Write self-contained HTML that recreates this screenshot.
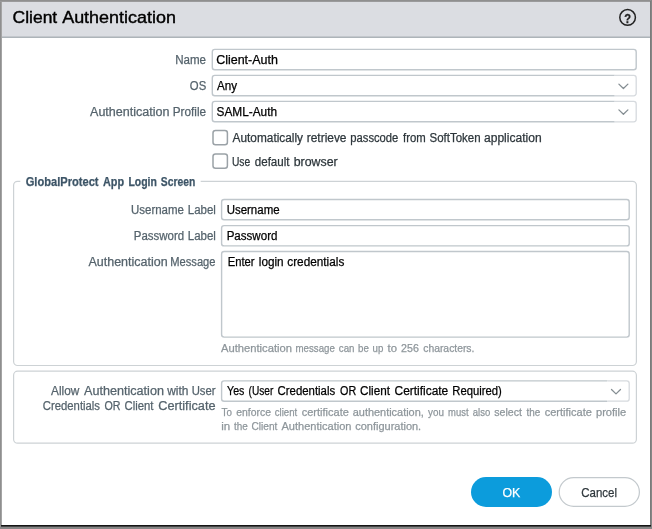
<!DOCTYPE html>
<html><head><meta charset="utf-8"><title>Client Authentication</title>
<style>
*{box-sizing:border-box;margin:0;padding:0}
html,body{width:652px;height:529px;overflow:hidden;background:#fff}
body{font-family:"Liberation Sans",sans-serif;font-size:12px;color:#000;position:relative}
#wrap{position:absolute;left:0;top:0;width:652px;height:529px;will-change:transform}
.abs{position:absolute}
.t{position:absolute;left:0;white-space:nowrap;line-height:1;transform-origin:0 50%;-webkit-text-stroke:0.25px currentColor}
#bl{left:0;top:0;width:2px;height:529px;background:linear-gradient(90deg,#8f8f8f 0,#8f8f8f 1px,#a4a4a4 1px,#a4a4a4 2px)}
#bt{left:0;top:0;width:652px;height:2px;background:linear-gradient(180deg,#8f8f8f 0,#8f8f8f 1px,#9a9a9b 1px,#9a9a9b 2px)}
#br1{left:650px;top:1px;width:1px;height:526px;background:#7b7b7b}
#br2{left:651px;top:0;width:1px;height:529px;background:#868686}
#bb1{left:1px;top:525px;width:650px;height:2px;background:linear-gradient(180deg,#141414 0,#141414 1px,#454545 1px,#454545 2px)}
#bb2{left:0;top:527px;width:652px;height:2px;background:#868686}
#hdr{left:2px;top:2px;width:648px;height:35px;background:#dbdde2;border-bottom:1px solid #c3c7cc}
#hdr2{left:2px;top:37px;width:648px;height:1px;background:#adb4b9}
.inp{position:absolute;height:21px;border:1px solid #b4bcc0;border-radius:2px;background:#fff}
.trg{position:absolute;width:23px;height:21px;border:1px solid #d3d8db;border-left:none;border-radius:0 2px 2px 0;background:#fff}
.trg svg{position:absolute;left:4px;top:7px}
.cb{position:absolute;width:15px;height:15px;border:1px solid #8a9398;border-radius:2.5px;background:#fff}
.fs{position:absolute;border:1px solid #d0d4d7;border-radius:4px}
.btn{position:absolute;width:81px;height:30px;border-radius:15px}
.tt{-webkit-text-stroke:0.4px currentColor}

</style></head><body><div id="wrap">
<div class="abs" id="hdr"></div><div class="abs" id="hdr2"></div>
<svg class="abs" style="left:617px;top:7px" width="22" height="22" viewBox="0 0 22 22"><circle cx="10.6" cy="10.4" r="7.8" fill="none" stroke="#222" stroke-width="1.5"/><text transform="translate(10.65 15.5) scale(0.84 1)" x="0" y="0" text-anchor="middle" font-family="Liberation Sans, sans-serif" font-weight="bold" font-size="13.2" fill="#222" stroke="#222" stroke-width="0.3">?</text></svg>
<svg class="abs" id="boxes" style="left:0;top:0" width="652" height="529" viewBox="0 0 652 529" fill="none">
<g stroke="#c0c7cc" stroke-width="1.4" fill="#fff">
<rect x="212.3" y="49.4" width="423.9" height="20.3" rx="2.5"/>
<rect x="221.6" y="199.5" width="407.6" height="20.2" rx="2.5"/>
<rect x="221.6" y="225.6" width="407.6" height="20.3" rx="2.5"/>
<rect x="221.6" y="251.5" width="407.6" height="85.6" rx="2.5"/>
</g>
<g stroke="#d6dade" stroke-width="1.3" fill="#fff">
<path d="M614.6 75.4H633.7a2.5 2.5 0 0 1 2.5 2.5V93.3a2.5 2.5 0 0 1 -2.5 2.5H614.6"/>
<path d="M614.6 101.4H633.7a2.5 2.5 0 0 1 2.5 2.5V119.3a2.5 2.5 0 0 1 -2.5 2.5H614.6"/>
<path d="M607.3 380.9H626.7a2.5 2.5 0 0 1 2.5 2.5V398.7a2.5 2.5 0 0 1 -2.5 2.5H607.3"/>
</g>
<g stroke="#c0c7cc" stroke-width="1.4" fill="#fff">
<path d="M614.6 75.4H214.8a2.5 2.5 0 0 0 -2.5 2.5V93.3a2.5 2.5 0 0 0 2.5 2.5H614.6"/>
<path d="M614.6 101.4H214.8a2.5 2.5 0 0 0 -2.5 2.5V119.3a2.5 2.5 0 0 0 2.5 2.5H614.6"/>
<path d="M607.3 380.9H224.1a2.5 2.5 0 0 0 -2.5 2.5V398.7a2.5 2.5 0 0 0 2.5 2.5H607.3"/>
</g>
<g stroke="#858e93" stroke-width="1.3" stroke-linecap="round" stroke-linejoin="round">
<path d="M618.9 84.1L623.4 88.5L627.9 84.1"/>
<path d="M618.9 109.9L623.4 114.3L627.9 109.9"/>
<path d="M611.5 389.5L616 393.9L620.5 389.5"/>
</g>
<g stroke="#9ba2a7" stroke-width="1.5" fill="#fff">
<rect x="213" y="130.6" width="14.4" height="14.2" rx="2.5"/>
<rect x="213" y="154" width="14.4" height="14.2" rx="2.5"/>
</g>
<g stroke="#cdd2d5" stroke-width="1.2">
<path d="M20.3 181.3H17.6a4 4 0 0 0 -4 4V361.5a4 4 0 0 0 4 4H632.4a4 4 0 0 0 4 -4V185.3a4 4 0 0 0 -4 -4H200.7"/>
<rect x="13.6" y="371.2" width="622.8" height="72" rx="4"/>
</g>
<rect x="471" y="477" width="81" height="30" rx="15" fill="#0c9cdc"/>
<rect x="559.2" y="477.6" width="80.2" height="28.8" rx="14.4" fill="#fff" stroke="#c3c9cd" stroke-width="1.2"/>
</svg>

<div class="t tt" id="ti0" style="top:9px;font-size:17px;font-weight:normal;color:#000;transform:translateX(12.53px) scaleX(1.0282)">Client</div>
<div class="t tt" id="ti1" style="top:9px;font-size:17px;font-weight:normal;color:#000;transform:translateX(62.16px) scaleX(1.0557)">Authentication</div>
<div class="t" id="ln0" style="top:54px;font-size:12px;font-weight:normal;color:#55636c;transform:translateX(175.13px) scaleX(0.9641)">Name</div>
<div class="t" id="vn0" style="top:54px;font-size:12px;font-weight:normal;color:#000;transform:translateX(216.13px) scaleX(1.0403)">Client-Auth</div>
<div class="t" id="lo0" style="top:80px;font-size:12px;font-weight:normal;color:#55636c;transform:translateX(189.83px) scaleX(0.9434)">OS</div>
<div class="t" id="vo0" style="top:80px;font-size:12px;font-weight:normal;color:#000;transform:translateX(217.09px) scaleX(0.9716)">Any</div>
<div class="t" id="la0" style="top:106px;font-size:12px;font-weight:normal;color:#55636c;transform:translateX(90.00px) scaleX(1.0464)">Authentication</div>
<div class="t" id="la1" style="top:106px;font-size:12px;font-weight:normal;color:#55636c;transform:translateX(172.76px) scaleX(0.9785)">Profile</div>
<div class="t" id="va0" style="top:106px;font-size:12px;font-weight:normal;color:#000;transform:translateX(216.51px) scaleX(0.9866)">SAML-Auth</div>
<div class="t" id="ca0" style="top:132px;font-size:12px;font-weight:normal;color:#2d363b;transform:translateX(232.60px) scaleX(0.9867)">Automatically</div>
<div class="t" id="ca1" style="top:132px;font-size:12px;font-weight:normal;color:#2d363b;transform:translateX(306.75px) scaleX(0.9935)">retrieve</div>
<div class="t" id="ca2" style="top:132px;font-size:12px;font-weight:normal;color:#2d363b;transform:translateX(350.30px) scaleX(0.9353)">passcode</div>
<div class="t" id="ca3" style="top:132px;font-size:12px;font-weight:normal;color:#2d363b;transform:translateX(403.00px) scaleX(0.9462)">from</div>
<div class="t" id="ca4" style="top:132px;font-size:12px;font-weight:normal;color:#2d363b;transform:translateX(429.52px) scaleX(0.9569)">SoftToken</div>
<div class="t" id="ca5" style="top:132px;font-size:12px;font-weight:normal;color:#2d363b;transform:translateX(484.00px) scaleX(1.0044)">application</div>
<div class="t" id="cb0" style="top:156px;font-size:12px;font-weight:normal;color:#2d363b;transform:translateX(231.93px) scaleX(0.8553)">Use</div>
<div class="t" id="cb1" style="top:156px;font-size:12px;font-weight:normal;color:#2d363b;transform:translateX(254.76px) scaleX(0.9650)">default</div>
<div class="t" id="cb2" style="top:156px;font-size:12px;font-weight:normal;color:#2d363b;transform:translateX(293.73px) scaleX(1.0298)">browser</div>
<div class="t" id="lg0" style="top:176px;font-size:12px;font-weight:bold;color:#3d5567;transform:translateX(25.68px) scaleX(0.9265)">GlobalProtect</div>
<div class="t" id="lg1" style="top:176px;font-size:12px;font-weight:bold;color:#3d5567;transform:translateX(102.91px) scaleX(0.9055)">App</div>
<div class="t" id="lg2" style="top:176px;font-size:12px;font-weight:bold;color:#3d5567;transform:translateX(128.41px) scaleX(0.8722)">Login</div>
<div class="t" id="lg3" style="top:176px;font-size:12px;font-weight:bold;color:#3d5567;transform:translateX(160.86px) scaleX(0.8610)">Screen</div>
<div class="t" id="lu0" style="top:204px;font-size:12px;font-weight:normal;color:#55636c;transform:translateX(130.98px) scaleX(0.9559)">Username</div>
<div class="t" id="lu1" style="top:204px;font-size:12px;font-weight:normal;color:#55636c;transform:translateX(187.76px) scaleX(0.9590)">Label</div>
<div class="t" id="vu0" style="top:204px;font-size:12px;font-weight:normal;color:#000;transform:translateX(226.63px) scaleX(0.9565)">Username</div>
<div class="t" id="lp0" style="top:230px;font-size:12px;font-weight:normal;color:#55636c;transform:translateX(133.84px) scaleX(0.9543)">Password</div>
<div class="t" id="lp1" style="top:230px;font-size:12px;font-weight:normal;color:#55636c;transform:translateX(187.76px) scaleX(0.9590)">Label</div>
<div class="t" id="vp0" style="top:230px;font-size:12px;font-weight:normal;color:#000;transform:translateX(226.63px) scaleX(0.9641)">Password</div>
<div class="t" id="lm0" style="top:256px;font-size:12px;font-weight:normal;color:#55636c;transform:translateX(88.45px) scaleX(1.0409)">Authentication</div>
<div class="t" id="lm1" style="top:256px;font-size:12px;font-weight:normal;color:#55636c;transform:translateX(170.30px) scaleX(0.9282)">Message</div>
<div class="t" id="vm0" style="top:256px;font-size:12px;font-weight:normal;color:#000;transform:translateX(227.69px) scaleX(0.9351)">Enter</div>
<div class="t" id="vm1" style="top:256px;font-size:12px;font-weight:normal;color:#000;transform:translateX(258.77px) scaleX(0.9792)">login</div>
<div class="t" id="vm2" style="top:256px;font-size:12px;font-weight:normal;color:#000;transform:translateX(287.25px) scaleX(0.9826)">credentials</div>
<div class="t" id="ha0" style="top:343px;font-size:11px;font-weight:normal;color:#8e969b;transform:translateX(221.00px) scaleX(1.0181)">Authentication</div>
<div class="t" id="ha1" style="top:343px;font-size:11px;font-weight:normal;color:#8e969b;transform:translateX(295.56px) scaleX(0.8800)">message</div>
<div class="t" id="ha2" style="top:343px;font-size:11px;font-weight:normal;color:#8e969b;transform:translateX(338.78px) scaleX(0.8824)">can</div>
<div class="t" id="ha3" style="top:343px;font-size:11px;font-weight:normal;color:#8e969b;transform:translateX(358.08px) scaleX(0.8803)">be</div>
<div class="t" id="ha4" style="top:343px;font-size:11px;font-weight:normal;color:#8e969b;transform:translateX(372.56px) scaleX(0.8800)">up</div>
<div class="t" id="ha5" style="top:343px;font-size:11px;font-weight:normal;color:#8e969b;transform:translateX(387.50px) scaleX(1.0286)">to</div>
<div class="t" id="ha6" style="top:343px;font-size:11px;font-weight:normal;color:#8e969b;transform:translateX(401.01px) scaleX(0.9714)">256</div>
<div class="t" id="ha7" style="top:343px;font-size:11px;font-weight:normal;color:#8e969b;transform:translateX(423.26px) scaleX(0.9400)">characters.</div>
<div class="t" id="lx0" style="top:385px;font-size:12px;font-weight:normal;color:#55636c;transform:translateX(51.10px) scaleX(0.9846)">Allow</div>
<div class="t" id="lx1" style="top:385px;font-size:12px;font-weight:normal;color:#55636c;transform:translateX(84.00px) scaleX(1.0509)">Authentication</div>
<div class="t" id="lx2" style="top:385px;font-size:12px;font-weight:normal;color:#55636c;transform:translateX(167.15px) scaleX(0.9956)">with</div>
<div class="t" id="lx3" style="top:385px;font-size:12px;font-weight:normal;color:#55636c;transform:translateX(191.64px) scaleX(0.9431)">User</div>
<div class="t" id="ly0" style="top:400px;font-size:12px;font-weight:normal;color:#55636c;transform:translateX(42.83px) scaleX(0.9414)">Credentials</div>
<div class="t" id="ly1" style="top:400px;font-size:12px;font-weight:normal;color:#55636c;transform:translateX(104.49px) scaleX(0.8885)">OR</div>
<div class="t" id="ly2" style="top:400px;font-size:12px;font-weight:normal;color:#55636c;transform:translateX(124.53px) scaleX(0.9438)">Client</div>
<div class="t" id="ly3" style="top:400px;font-size:12px;font-weight:normal;color:#55636c;transform:translateX(158.27px) scaleX(1.0592)">Certificate</div>
<div class="t" id="vx0" style="top:385px;font-size:12px;font-weight:normal;color:#000;transform:translateX(227.06px) scaleX(0.8826)">Yes</div>
<div class="t" id="vx1" style="top:385px;font-size:12px;font-weight:normal;color:#000;transform:translateX(248.58px) scaleX(0.8451)">(User</div>
<div class="t" id="vx2" style="top:385px;font-size:12px;font-weight:normal;color:#000;transform:translateX(277.52px) scaleX(0.9500)">Credentials</div>
<div class="t" id="vx3" style="top:385px;font-size:12px;font-weight:normal;color:#000;transform:translateX(340.05px) scaleX(0.8971)">OR</div>
<div class="t" id="vx4" style="top:385px;font-size:12px;font-weight:normal;color:#000;transform:translateX(360.01px) scaleX(0.9752)">Client</div>
<div class="t" id="vx5" style="top:385px;font-size:12px;font-weight:normal;color:#000;transform:translateX(394.50px) scaleX(0.9953)">Certificate</div>
<div class="t" id="vx6" style="top:385px;font-size:12px;font-weight:normal;color:#000;transform:translateX(452.29px) scaleX(0.9407)">Required)</div>
<div class="t" id="hb0" style="top:407px;font-size:11px;font-weight:normal;color:#8e969b;transform:translateX(221.50px) scaleX(0.8889)">To</div>
<div class="t" id="hb1" style="top:407px;font-size:11px;font-weight:normal;color:#8e969b;transform:translateX(236.26px) scaleX(0.9444)">enforce</div>
<div class="t" id="hb2" style="top:407px;font-size:11px;font-weight:normal;color:#8e969b;transform:translateX(274.78px) scaleX(0.8702)">client</div>
<div class="t" id="hb3" style="top:407px;font-size:11px;font-weight:normal;color:#8e969b;transform:translateX(301.75px) scaleX(1.0000)">certificate</div>
<div class="t" id="hb4" style="top:407px;font-size:11px;font-weight:normal;color:#8e969b;transform:translateX(352.75px) scaleX(0.9929)">authentication,</div>
<div class="t" id="hb5" style="top:407px;font-size:11px;font-weight:normal;color:#8e969b;transform:translateX(428.00px) scaleX(0.8986)">you</div>
<div class="t" id="hb6" style="top:407px;font-size:11px;font-weight:normal;color:#8e969b;transform:translateX(448.07px) scaleX(0.8585)">must</div>
<div class="t" id="hb7" style="top:407px;font-size:11px;font-weight:normal;color:#8e969b;transform:translateX(472.78px) scaleX(0.8672)">also</div>
<div class="t" id="hb8" style="top:407px;font-size:11px;font-weight:normal;color:#8e969b;transform:translateX(494.26px) scaleX(0.9649)">select</div>
<div class="t" id="hb9" style="top:407px;font-size:11px;font-weight:normal;color:#8e969b;transform:translateX(526.50px) scaleX(0.9000)">the</div>
<div class="t" id="hb10" style="top:407px;font-size:11px;font-weight:normal;color:#8e969b;transform:translateX(544.75px) scaleX(1.0000)">certificate</div>
<div class="t" id="hb11" style="top:407px;font-size:11px;font-weight:normal;color:#8e969b;transform:translateX(595.99px) scaleX(1.0087)">profile</div>
<div class="t" id="hc0" style="top:421px;font-size:11px;font-weight:normal;color:#8e969b;transform:translateX(221.14px) scaleX(1.0488)">in</div>
<div class="t" id="hc1" style="top:421px;font-size:11px;font-weight:normal;color:#8e969b;transform:translateX(234.00px) scaleX(0.9000)">the</div>
<div class="t" id="hc2" style="top:421px;font-size:11px;font-weight:normal;color:#8e969b;transform:translateX(251.54px) scaleX(0.9189)">Client</div>
<div class="t" id="hc3" style="top:421px;font-size:11px;font-weight:normal;color:#8e969b;transform:translateX(281.50px) scaleX(1.0036)">Authentication</div>
<div class="t" id="hc4" style="top:421px;font-size:11px;font-weight:normal;color:#8e969b;transform:translateX(355.25px) scaleX(0.9976)">configuration.</div>
<div class="t" id="ok0" style="top:486px;font-size:13px;font-weight:normal;color:#fff;transform:translateX(502.47px) scaleX(0.9481)">OK</div>
<div class="t" id="cn0" style="top:486px;font-size:13px;font-weight:normal;color:#30383d;transform:translateX(581.26px) scaleX(0.8830)">Cancel</div>
<div class="abs" id="bl"></div><div class="abs" id="bt"></div><div class="abs" id="br1"></div><div class="abs" id="br2"></div><div class="abs" id="bb1"></div><div class="abs" id="bb2"></div>
</div></body></html>
